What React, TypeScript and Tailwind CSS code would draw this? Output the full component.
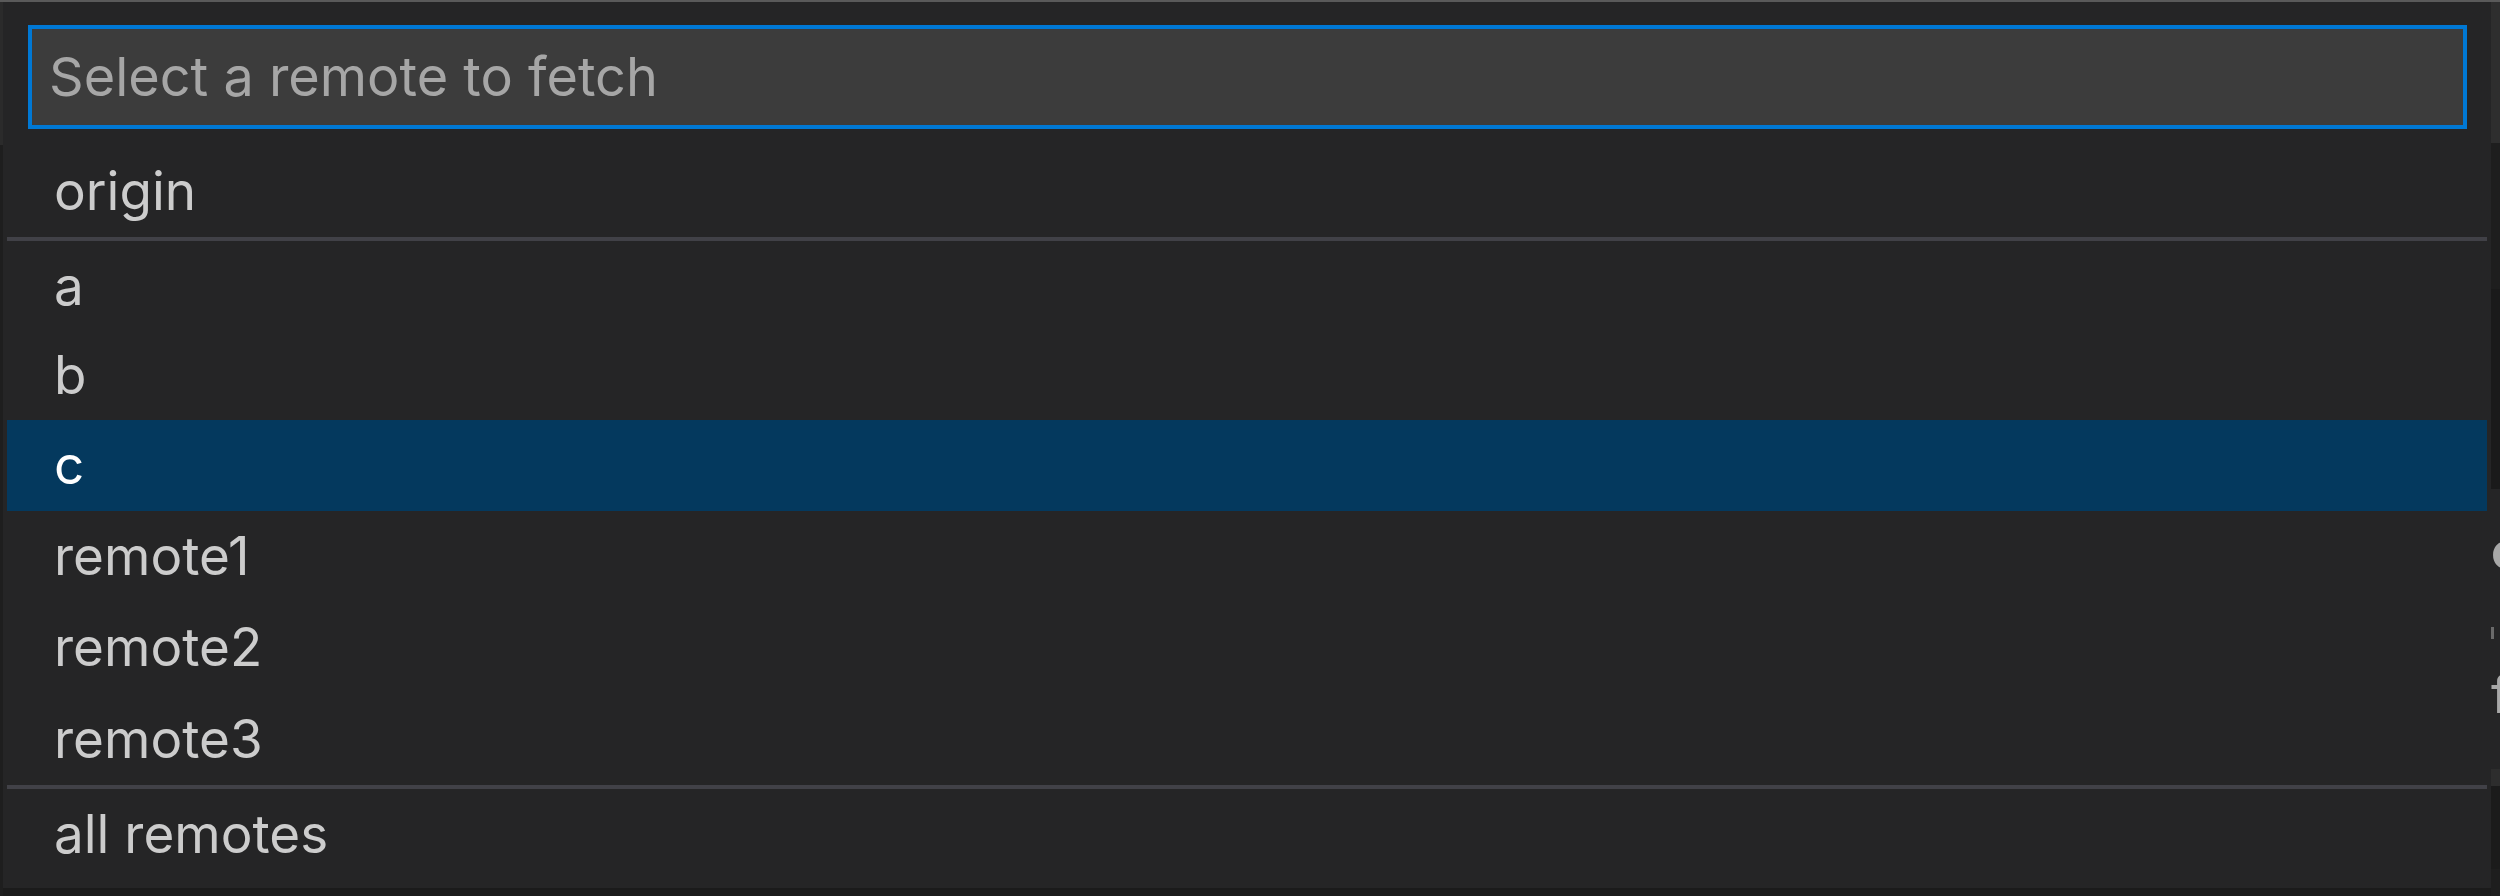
import React from "react";

const font = { fontFamily: "Inter, 'Noto Sans', sans-serif" };

function Row({ label, h, selected }: { label: string; h: string; selected?: boolean }) {
  return (
    <div
      className={`${h} mx-[4px] flex items-center pl-[47px] text-[53px] leading-none ${
        selected ? "bg-[#04395e] text-white" : "text-[#cccccc]"
      }`}
    >
      {label}
    </div>
  );
}

export default function App() {
  return (
    <div className="w-[2500px] h-[896px] bg-[#1b1b1b] flex flex-col overflow-hidden" style={font}>
      <div className="h-[2px] w-full bg-[#5a5a5a] shrink-0" />
      <div className="flex flex-1">
        {/* left strip */}
        <div className="w-[3px] flex flex-col">
          <div className="h-[143px] bg-[#2b2b2b]" />
          <div className="flex-1 bg-[#1e1e1e]" />
        </div>
        {/* panel */}
        <div className="w-[2488px] h-[886px] bg-[#252526] flex flex-col">
          <div className="mt-[23px] ml-[25px] mr-[24px] h-[104px] border-[4px] border-[#0078d4] bg-[#3c3c3c] flex items-center pl-[17px]">
            <span className="text-[54px] leading-none text-[#a6a6a6]">Select a remote to fetch</span>
          </div>
          <div className="mt-[17px]">
            <Row label="origin" h="h-[91px]" />
          </div>
          <div className="mx-[4px] h-[4px] bg-[#414147]" />
          <Row label="a" h="h-[90px]" />
          <Row label="b" h="h-[89px]" />
          <Row label="c" h="h-[91px]" selected />
          <Row label="remote1" h="h-[91px]" />
          <Row label="remote2" h="h-[91px]" />
          <Row label="remote3" h="h-[92px]" />
          <div className="mx-[4px] h-[4px] bg-[#414147]" />
          <Row label="all remotes" h="h-[91px]" />
        </div>
        {/* right strip (background content peeking) */}
        <div className="w-[9px] flex flex-col overflow-hidden">
          <div className="h-[141px] bg-[#2e2e2e] shrink-0" />
          <div className="h-[146px] bg-[#1e1e1e] shrink-0" />
          <div className="h-[200px] bg-[#1a1a1a] shrink-0" />
          <div className="h-[280px] bg-[#252526] shrink-0 relative overflow-hidden">
            <span className="absolute left-0 top-[36px] text-[52px] leading-none font-bold text-[#a8a8a8]">c</span>
            <span className="absolute left-0 top-[138px] w-[3px] h-[12px] bg-[#6a6a6a]" />
            <span className="absolute left-0 top-[180px] text-[52px] leading-none text-[#a8a8a8]">f</span>
          </div>
          <div className="h-[17px] bg-[#2d2d2d] shrink-0" />
          <div className="h-[83px] bg-[#1b1b1b] shrink-0" />
          <div className="flex-1 bg-[#1e1e1e]" />
        </div>
      </div>
    </div>
  );
}
